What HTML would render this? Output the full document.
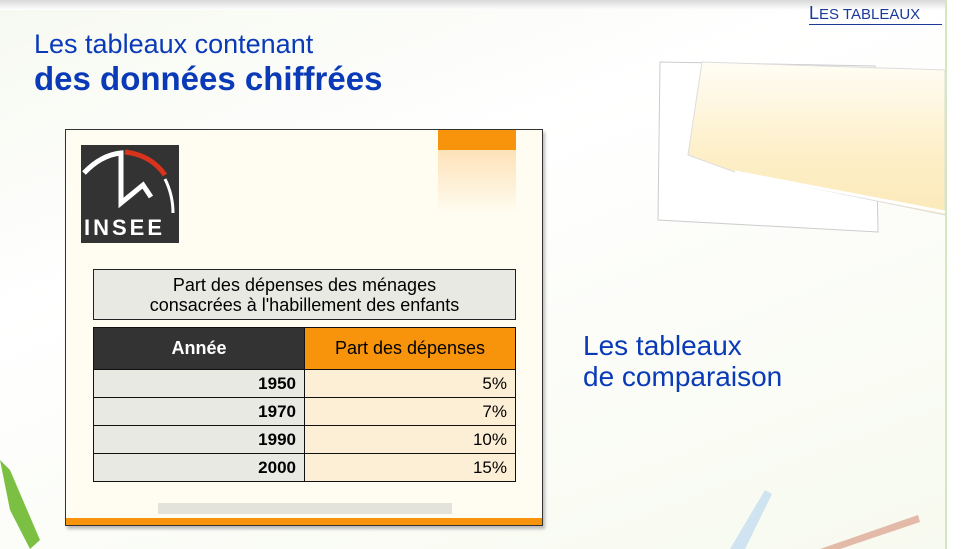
<!DOCTYPE html>
<html><head><meta charset="utf-8"><style>
body{margin:0;width:972px;height:549px;overflow:hidden;font-family:"Liberation Sans",sans-serif;position:relative;
background:linear-gradient(160deg,#f6f9f0 0%,#ffffff 35%,#f7faef 100%);}
.topbar{position:absolute;left:0;top:0;width:945px;height:10px;background:linear-gradient(#d8d8d8,#fff);}
.rb{position:absolute;left:945px;top:0;width:2px;height:549px;background:#d4e8c0;}
.rw{position:absolute;left:947px;top:0;width:25px;height:549px;background:#fff;}
.nav{position:absolute;left:809px;top:4px;font-size:18px;color:#1a3a9a;border-bottom:1px solid #1a3a9a;width:133px;line-height:19px;white-space:nowrap}
.nav small{font-size:15px}
.t1{position:absolute;left:34px;top:29px;font-size:27px;color:#0a3ab8}
.t2{position:absolute;left:34px;top:60px;font-size:33px;font-weight:bold;color:#0a3ab8}
.side{position:absolute;left:583px;top:330px;font-size:28px;color:#0a3ab8;line-height:31px}
.card{position:absolute;left:65px;top:129px;width:476px;height:395px;border:1px solid #333;background:#fffdf2;box-shadow:2px 3px 3px #bbb}
.ob{position:absolute;left:372px;top:0;width:78px;height:20px;background:#f7940c}
.of{position:absolute;left:372px;top:20px;width:78px;height:65px;background:linear-gradient(#fde2b8,rgba(255,253,242,0))}
.bot{position:absolute;left:0;bottom:0;width:476px;height:7px;background:#f7940c}
.gb{position:absolute;left:92px;top:373px;width:294px;height:11px;background:#e3e3dc}
.logo{position:absolute;left:15px;top:15px;width:98px;height:98px;background:#333}
.logo span{position:absolute;left:3px;bottom:2px;color:#fff;font-size:22px;font-weight:bold;letter-spacing:3px}
.tb{position:absolute;left:27px;top:139px;border:1px solid #222;background:#e9e9e4;text-align:center;font-size:18px;line-height:20px;padding-top:5px;box-sizing:border-box;width:423px;height:51px}
table{position:absolute;left:27px;top:197px;border-collapse:collapse;font-size:17px}
td{border:1px solid #111;height:27px;padding:0 8px}
.h td{height:41px;font-size:18px}
</style></head><body>
<div class="topbar"></div><div class="rb"></div><div class="rw"></div>
<svg style="position:absolute;left:0;top:0" width="945" height="549">
<defs><linearGradient id="g" x1="0" y1="0" x2="0" y2="1"><stop offset="0" stop-color="#fffdf5"/><stop offset=".6" stop-color="#fdefc8"/><stop offset="1" stop-color="#fbe9b8"/></linearGradient></defs>
<polygon points="660,62 875,66 878,232 658,220" fill="#fff" stroke="#ccc"/>
<polygon points="702,62 945,70 945,215 735,172 688,155" fill="url(#g)" stroke="#ddd"/>
<line x1="735" y1="172" x2="945" y2="212" stroke="#fff" stroke-width="3"/>
<polygon points="0,460 10,470 40,540 30,549 10,510" fill="#7cc043"/>
<polygon points="730,549 765,490 772,494 745,549" fill="#cfe3f0"/>
<polygon points="820,549 918,515 920,522 840,549" fill="#e3b9a8"/>
</svg>
<div class="nav">L<small>ES TABLEAUX</small></div>
<div class="t1">Les tableaux contenant</div>
<div class="t2">des données chiffrées</div>
<div class="side">Les tableaux<br>de comparaison</div>
<div class="card">
<div class="ob"></div><div class="of"></div>
<div class="logo"><svg width="98" height="70" style="position:absolute;left:0;top:0">
<path d="M3,28 Q20,10 40,8 L40,58 L62,40 L70,52" stroke="#fff" stroke-width="5" fill="none"/>
<path d="M44,7 Q70,10 84,30" stroke="#d8331c" stroke-width="5" fill="none"/>
<path d="M84,34 Q92,50 92,68" stroke="#fff" stroke-width="3" fill="none"/></svg><span>INSEE</span></div>
<div class="tb">Part des dépenses des ménages<br>consacrées à l'habillement des enfants</div>
<table>
<tr class="h"><td style="width:194px;background:#333;color:#fff;font-weight:bold;text-align:center">Année</td><td style="width:194px;background:#f7940c;text-align:center">Part des dépenses</td></tr>
<tr><td style="background:#e9e9e4;text-align:right;font-weight:bold">1950</td><td style="background:#fdefd6;text-align:right">5%</td></tr>
<tr><td style="background:#e9e9e4;text-align:right;font-weight:bold">1970</td><td style="background:#fdefd6;text-align:right">7%</td></tr>
<tr><td style="background:#e9e9e4;text-align:right;font-weight:bold">1990</td><td style="background:#fdefd6;text-align:right">10%</td></tr>
<tr><td style="background:#e9e9e4;text-align:right;font-weight:bold">2000</td><td style="background:#fdefd6;text-align:right">15%</td></tr>
</table>
<div class="gb"></div><div class="bot"></div>
</div>
</body></html>
